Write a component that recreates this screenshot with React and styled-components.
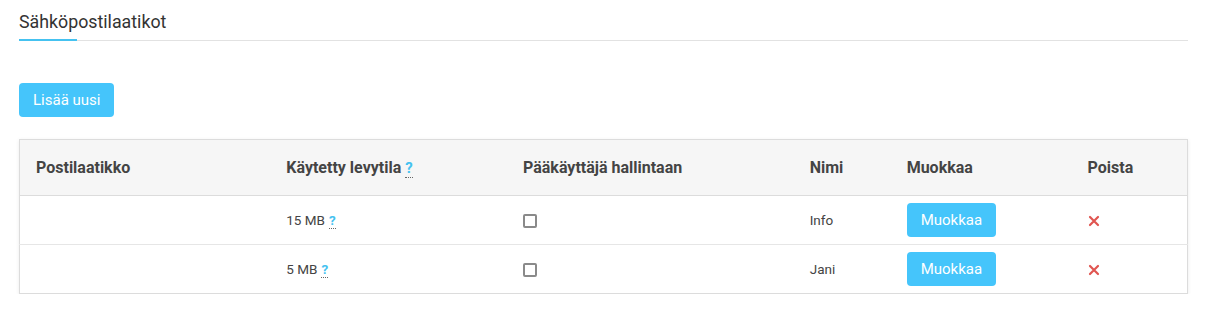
import React from "react";
import styled, { createGlobalStyle } from "styled-components";

const GlobalStyle = createGlobalStyle`
  body {
    margin: 0;
    background: #fff;
    font-family: Roboto, "Liberation Sans", Arial, sans-serif;
    color: #444;
  }
`;

const Page = styled.div`
  padding: 0 28px 0 19px;
`;

const Heading = styled.div`
  border-bottom: 1px solid #e2e2e2;
  height: 41px;
  box-sizing: border-box;
  display: flex;
`;

const HeadingTitle = styled.h2`
  margin: 0;
  padding-top: 12px;
  font-size: 17.8px;
  font-weight: 400;
  color: #333;
  line-height: 20px;
  position: relative;
  &::after {
    content: "";
    position: absolute;
    left: 0;
    bottom: -1px;
    width: 58px;
    height: 2px;
    background: #45c2f0;
  }
`;

const Button = styled.button`
  border: none;
  border-radius: 4px;
  background: #45c5fb;
  color: #fff;
  font-family: Roboto, "Liberation Sans", Arial, sans-serif;
  font-size: ${(p) => p.size || 15}px;
  height: 34px;
  padding: 0 ${(p) => p.pad || 14}px;
  cursor: pointer;
`;

const Toolbar = styled.div`
  margin-top: 42px;
  margin-bottom: 22px;
`;

const Table = styled.table`
  width: 1169px;
  border-collapse: collapse;
  border: 1px solid #dcdcdc;
  box-shadow: 0 1px 4px rgba(0, 0, 0, 0.08);
  font-size: 13.5px;
`;

const Th = styled.th`
  background: #f6f6f6;
  text-align: left;
  font-weight: 700;
  font-size: 16px;
  color: #444;
  height: 56px;
  padding: 0 16px;
  border-bottom: 1px solid #dcdcdc;
  width: ${(p) => p.w}px;
  box-sizing: border-box;
`;

const Td = styled.td`
  height: 48px;
  padding: 0 16px;
  border-top: 1px solid #e6e6e6;
  color: #444;
`;

const Help = styled.abbr`
  color: #45c2f0;
  font-weight: 700;
  text-decoration: none;
  border-bottom: 1px dotted #666;
  margin-left: 4px;
  cursor: help;
  font-size: ${(p) => p.size || 13.5}px;
`;

const Check = styled.span`
  display: inline-block;
  width: 10px;
  height: 10px;
  border: 2px solid #8a8a8a;
  border-radius: 2px;
  vertical-align: middle;
  background: #fff;
`;

const Cross = () => (
  <svg width="12" height="12" viewBox="0 0 12 12" style={{ verticalAlign: "middle" }}>
    <path d="M2 2 L10 10 M10 2 L2 10" stroke="#e05550" strokeWidth="2.2" strokeLinecap="round" />
  </svg>
);

const rows = [
  { size: "15 MB", name: "Info" },
  { size: "5 MB", name: "Jani" },
];

export default function App() {
  return (
    <Page>
      <GlobalStyle />
      <Heading>
        <HeadingTitle>Sähköpostilaatikot</HeadingTitle>
      </Heading>
      <Toolbar>
        <Button>Lisää uusi</Button>
      </Toolbar>
      <Table>
        <thead>
          <tr>
            <Th w={251}>Postilaatikko</Th>
            <Th w={237}>
              Käytetty levytila<Help size={15} title="Käytetty levytila">?</Help>
            </Th>
            <Th w={287}>Pääkäyttäjä hallintaan</Th>
            <Th w={97}>Nimi</Th>
            <Th w={181}>Muokkaa</Th>
            <Th w={116}>Poista</Th>
          </tr>
        </thead>
        <tbody>
          {rows.map((r) => (
            <tr key={r.name}>
              <Td />
              <Td>
                {r.size}
                <Help title="Levytila">?</Help>
              </Td>
              <Td>
                <Check />
              </Td>
              <Td>{r.name}</Td>
              <Td>
                <Button size={15} pad={14}>Muokkaa</Button>
              </Td>
              <Td>
                <Cross />
              </Td>
            </tr>
          ))}
        </tbody>
      </Table>
    </Page>
  );
}
